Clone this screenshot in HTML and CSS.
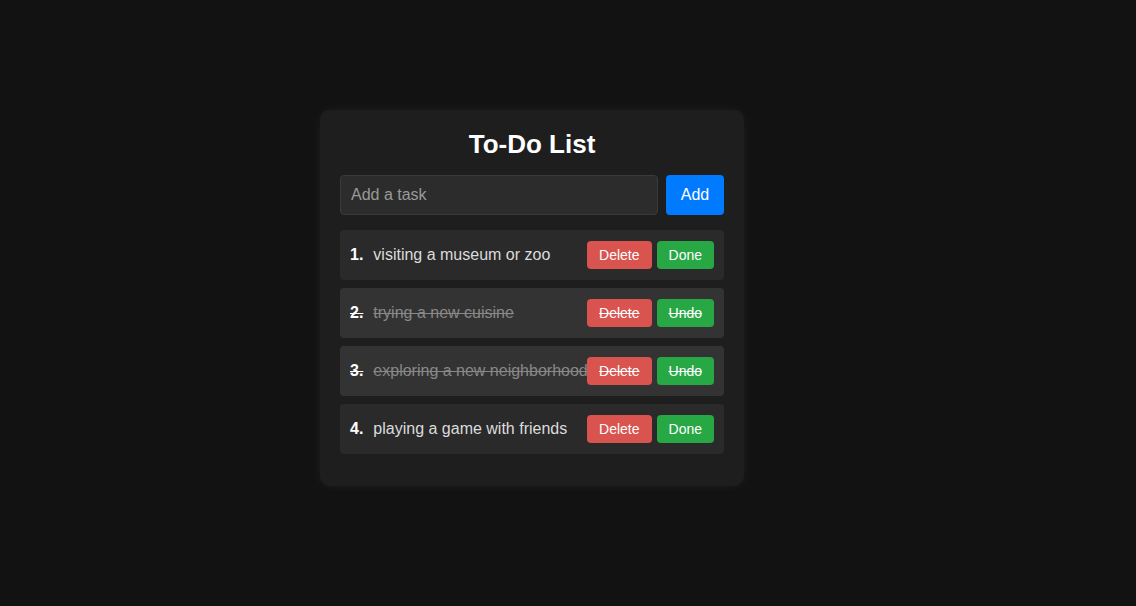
FILE: index.html
```html
<!DOCTYPE html>
<html lang="en">
<head>
<meta charset="utf-8">
<title>To-Do List</title>
<link rel="stylesheet" href="styles.css">
</head>
<body>
<div class="card">
  <h1 class="title">To-Do List</h1>
  <div class="add-row">
    <input class="task-input" type="text" placeholder="Add a task">
    <button class="add-btn">Add</button>
  </div>
  <ul class="list">
    <li class="item">
      <span class="num">1.</span><span class="text">visiting a museum or zoo</span>
      <button class="btn del">Delete</button><button class="btn done">Done</button>
    </li>
    <li class="item completed">
      <span class="num">2.</span><span class="text">trying a new cuisine</span>
      <button class="btn del">Delete</button><button class="btn done">Undo</button>
    </li>
    <li class="item completed">
      <span class="num">3.</span><span class="text">exploring a new neighborhood</span>
      <button class="btn del">Delete</button><button class="btn done">Undo</button>
    </li>
    <li class="item">
      <span class="num">4.</span><span class="text">playing a game with friends</span>
      <button class="btn del">Delete</button><button class="btn done">Done</button>
    </li>
  </ul>
</div>
</body>
</html>
```
FILE: styles.css
```css
* { box-sizing: border-box; }
html, body { margin: 0; height: 100%; }
body {
  background: #121212;
  font-family: "Liberation Sans", Arial, sans-serif;
  color: #e0e0e0;
  display: flex;
  justify-content: center;
  align-items: center;
  padding: 0 72px 10px 0;
}
.card {
  width: 424px;
  background: #1e1e1e;
  border-radius: 10px;
  padding: 20px;
  box-shadow: 0 0 12px rgba(255, 255, 255, 0.05);
}
.title {
  margin: 0 0 17px;
  font-size: 26px;
  line-height: 28px;
  text-align: center;
  color: #ffffff;
}
.add-row {
  display: flex;
  gap: 8px;
}
.task-input {
  flex: 1;
  height: 40px;
  padding: 10px;
  font-family: inherit;
  font-size: 16px;
  background: #2c2c2c;
  border: 1px solid #3a3a3a;
  border-radius: 4px;
  color: #e0e0e0;
  outline: none;
}
.task-input::placeholder { color: #9a9a9a; }
.add-btn {
  width: 58px;
  height: 40px;
  border: none;
  border-radius: 4px;
  background: #007bff;
  color: #fff;
  font-family: inherit;
  font-size: 16px;
}
.list {
  list-style: none;
  margin: 15px 0 12px;
  padding: 0;
  display: flex;
  flex-direction: column;
  gap: 8px;
}
.item {
  display: flex;
  align-items: center;
  height: 50px;
  padding: 0 10px;
  background: #2a2a2a;
  border-radius: 4px;
  font-size: 16px;
}
.num {
  font-weight: bold;
  color: #fff;
  margin-right: 10px;
}
.text {
  flex: 1;
  min-width: 0;
  white-space: nowrap;
  color: #dcdcdc;
}
.btn {
  flex: none;
  height: 28px;
  padding: 0 12px;
  border: none;
  border-radius: 4px;
  color: #fff;
  font-family: inherit;
  font-size: 14px;
  margin-left: 5px;
  position: relative;
}
.btn.del { background: #d9534f; margin-left: 0; }
.btn.done { background: #28a745; }
.completed { background: #333333; }
.completed .text { color: #888; text-decoration: line-through; }
.completed .num, .completed .btn { text-decoration: line-through; }
```
